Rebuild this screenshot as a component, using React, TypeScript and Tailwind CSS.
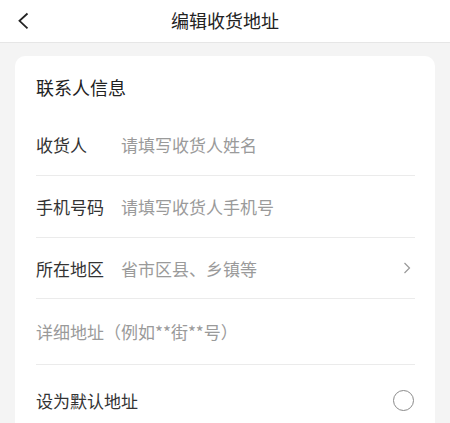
import React from "react";

const font = { fontFamily: '"Noto Sans CJK SC", "Noto Sans", sans-serif' };

function Row({
  label,
  placeholder,
  h,
  chevron,
}: {
  label: string;
  placeholder: string;
  h: string;
  chevron?: boolean;
}) {
  return (
    <div className={`flex items-center ${h}`}>
      <div className="w-[85px] shrink-0 text-[17px] leading-none text-[#333]">{label}</div>
      <div className="flex-1 text-[17px] leading-none text-[#9a9a9a]">{placeholder}</div>
      {chevron && (
        <svg width="8" height="12" viewBox="0 0 8 12" className="mr-[4px]">
          <path d="M1.5 1 L6.5 6 L1.5 11" fill="none" stroke="#999" strokeWidth="1.2" />
        </svg>
      )}
    </div>
  );
}

const Divider = () => <div className="h-px bg-[#ebebeb]" />;

export default function App() {
  return (
    <div className="w-[450px] h-[423px] overflow-hidden bg-[#f4f4f4]" style={font}>
      <div className="relative h-[43px] bg-white flex items-center justify-center border-b border-[#e6e6e6]">
        <svg
          width="12"
          height="18"
          viewBox="0 0 12 18"
          className="absolute left-[17px] top-[12px]"
        >
          <path d="M10.5 1.5 L2.5 8.8 L10.5 16.3" fill="none" stroke="#222" strokeWidth="1.8" />
        </svg>
        <div className="text-[18px] leading-none text-[#222] -mt-[3px]">编辑收货地址</div>
      </div>
      <div className="mx-[15px] mt-[13px] bg-white rounded-[10px] pl-[21px] pr-[20px] pt-[19px] h-[400px]">
        <div className="text-[18px] leading-[24px] text-[#222]">联系人信息</div>
        <div className="mt-[15px]">
          <Row label="收货人" placeholder="请填写收货人姓名" h="h-[61px]" />
          <Divider />
          <Row label="手机号码" placeholder="请填写收货人手机号" h="h-[61px]" />
          <Divider />
          <Row label="所在地区" placeholder="省市区县、乡镇等" h="h-[60px]" chevron />
          <Divider />
          <div className="flex items-center h-[65px] text-[17px] leading-none text-[#9a9a9a]">
            详细地址（例如**街**号）
          </div>
          <Divider />
          <div className="flex items-center justify-between h-[71px]">
            <div className="text-[17px] leading-none text-[#333]">设为默认地址</div>
            <div className="w-[21px] h-[21px] rounded-full border-[1.5px] border-[#8a8a8a] mr-px" />
          </div>
        </div>
      </div>
    </div>
  );
}
